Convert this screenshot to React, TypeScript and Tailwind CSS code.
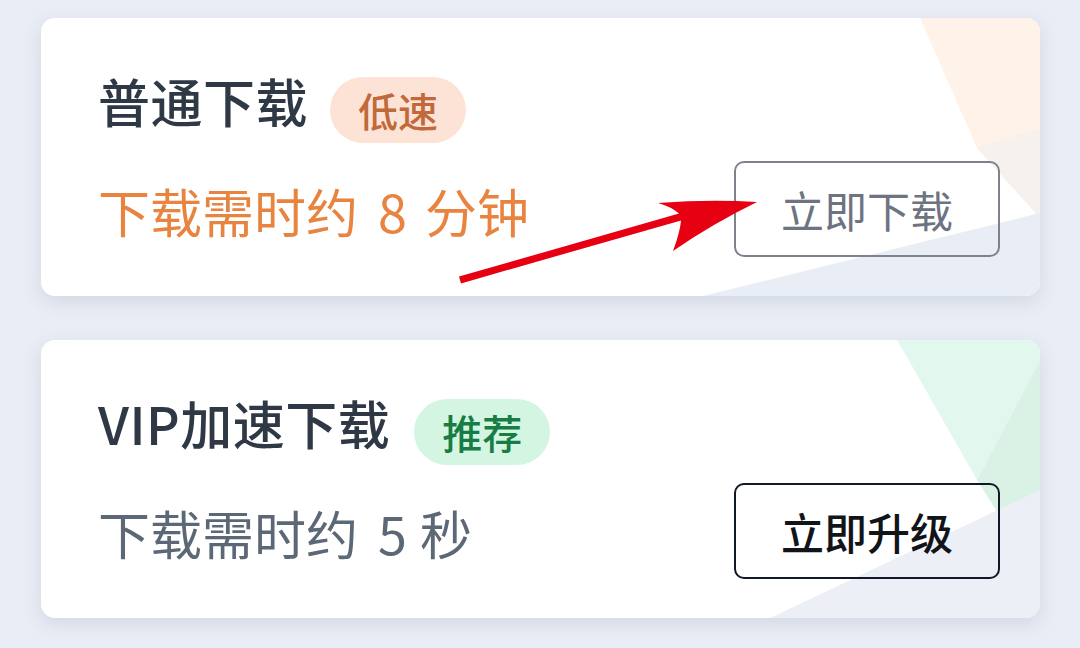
import React from "react";

const font = { fontFamily: '"Noto Sans CJK SC", "Noto Sans", sans-serif' };

function Deco1() {
  return (
    <svg className="absolute inset-0 h-full w-full" viewBox="0 0 999 278" preserveAspectRatio="none">
      <polygon points="879,0 999,0 999,200 936,130" fill="#fff2e8" />
      <polygon points="936,130 999,110 999,200" fill="#f7f1ee" />
      <polygon points="662,278 999,195 999,278" fill="#e9edf5" />
    </svg>
  );
}

function Deco2() {
  return (
    <svg className="absolute inset-0 h-full w-full" viewBox="0 0 1000 278" preserveAspectRatio="none">
      <polygon points="857,0 1000,0 1000,20 937,140" fill="#e2f8ef" />
      <polygon points="1000,20 937,140 1000,240" fill="#daf2e6" />
      <polygon points="730,278 1000,150 1000,278" fill="#eceff6" />
    </svg>
  );
}

function Card({
  title,
  badge,
  badgeCls,
  sub,
  subCls,
  btn,
  btnCls,
  deco,
}: {
  title: string;
  badge: string;
  badgeCls: string;
  sub: React.ReactNode;
  subCls: string;
  btn: string;
  btnCls: string;
  deco: React.ReactNode;
}) {
  return (
    <div className="relative h-[278px] overflow-hidden rounded-[14px] bg-white shadow-[0_6px_18px_rgba(150,160,185,0.28)]">
      {deco}
      <div className="relative flex h-full items-end justify-between pl-[57px] pr-[40px] pb-[39px]">
        <div className="flex h-full flex-col pt-[52px]">
          <div className="flex items-start">
            <span className="text-[52px] font-medium leading-[62px] tracking-[0.5px] text-[#2f3845]">{title}</span>
            <span className={`mt-[7px] flex h-[66px] items-center rounded-full px-[28px] text-[40px] font-medium ${badgeCls}`}>{badge}</span>
          </div>
          <div className={`mt-[37px] text-[52px] leading-[62px] ${subCls}`}>{sub}</div>
        </div>
        <div className={`flex h-[96px] w-[266px] items-center justify-center rounded-[10px] border-2 text-[43px] ${btnCls}`}>{btn}</div>
      </div>
    </div>
  );
}

export default function App() {
  return (
    <div className="relative h-[648px] w-[1080px] overflow-hidden bg-[#e9edf5]" style={font}>
      <div className="flex flex-col gap-[44px] pl-[41px] pr-[40px] pt-[18px]">
        <Card
          title="普通下载"
          badge="低速"
          badgeCls="ml-[22px] bg-[#fde3d5] text-[#c0693b]"
          sub={
            <>
              下载需时约<span className="ml-[20px] mr-[18px]">8</span>分钟
            </>
          }
          subCls="text-[#e8843f]"
          btn="立即下载"
          btnCls="border-[#7d828d] text-[#6d7380]"
          deco={<Deco1 />}
        />
        <Card
          title="VIP加速下载"
          badge="推荐"
          badgeCls="ml-[24px] bg-[#d3f5e2] text-[#177d44]"
          sub={
            <>
              下载需时约<span className="ml-[20px] mr-[13px]">5</span>秒
            </>
          }
          subCls="text-[#5d6877]"
          btn="立即升级"
          btnCls="border-[#111827] font-medium text-[#111418]"
          deco={<Deco2 />}
        />
      </div>
      <svg className="pointer-events-none absolute left-0 top-0" width="1080" height="648" viewBox="0 0 1080 648">
        <path
          d="M459,276.6 L679,213.6 Q672,207 658,203 Q710,199 757,202 Q712,224 673,251 Q680,232 681,220.4 L461,283.4 Z"
          fill="#e60012"
        />
      </svg>
    </div>
  );
}
